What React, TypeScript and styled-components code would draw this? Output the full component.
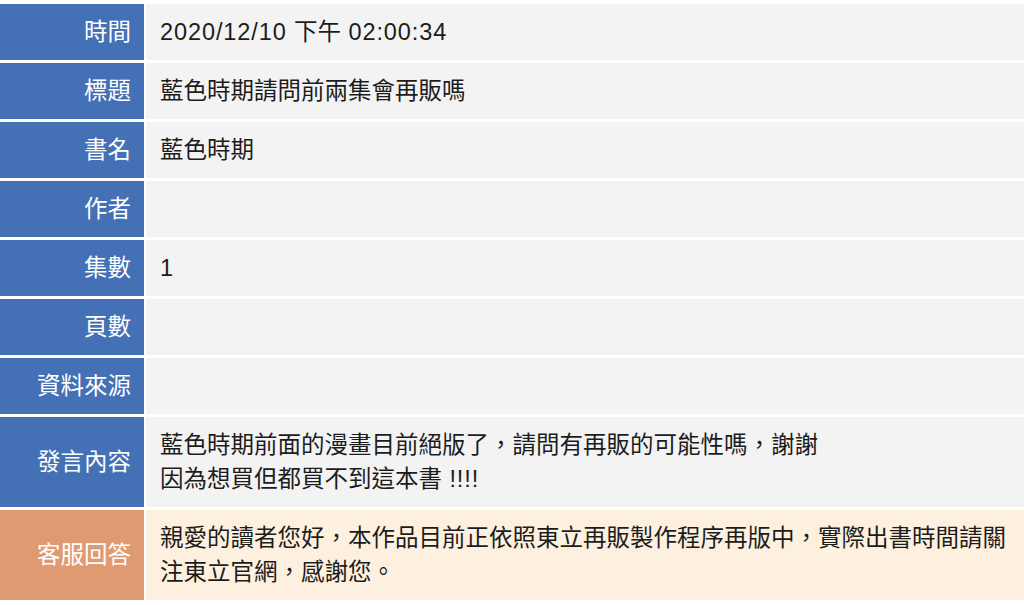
import React from 'react';
import styled, { createGlobalStyle } from 'styled-components';

type Tone = 'blue' | 'orange';

type Row = {
  label: string;
  value?: string[];
  tone?: Tone;
};

const rows: Row[] = [
  { label: '時間', value: ['2020/12/10 下午 02:00:34'] },
  { label: '標題', value: ['藍色時期請問前兩集會再販嗎'] },
  { label: '書名', value: ['藍色時期'] },
  { label: '作者' },
  { label: '集數', value: ['1'] },
  { label: '頁數' },
  { label: '資料來源' },
  {
    label: '發言內容',
    value: [
      '藍色時期前面的漫畫目前絕版了，請問有再販的可能性嗎，謝謝',
      '因為想買但都買不到這本書 !!!!',
    ],
  },
  {
    label: '客服回答',
    tone: 'orange',
    value: [
      '親愛的讀者您好，本作品目前正依照東立再販製作程序再版中，實際出書時間請關注東立官網，感謝您。',
    ],
  },
];

const GlobalStyle = createGlobalStyle`
  html, body {
    margin: 0;
    padding: 0;
    background: #ffffff;
  }
  body {
    font-family: "Liberation Sans", "Noto Sans CJK TC", sans-serif;
  }
`;

const Page = styled.div`
  width: 1024px;
  padding-top: 4px;
`;

const Table = styled.div`
  display: grid;
  grid-template-columns: 144px 1fr;
  column-gap: 2px;
  row-gap: 3px;
`;

const Label = styled.div<{ tone: Tone }>`
  display: flex;
  align-items: center;
  justify-content: flex-end;
  padding: 11px 13px 11px 0;
  background: ${({ tone }) => (tone === 'orange' ? '#e09a72' : '#4470b5')};
  color: #ffffff;
  font-size: 23.5px;
  line-height: 34px;
  white-space: nowrap;
`;

const Value = styled.div<{ tone: Tone }>`
  display: flex;
  flex-direction: column;
  justify-content: center;
  min-height: 34px;
  padding: 11px 8px 11px 14px;
  background: ${({ tone }) => (tone === 'orange' ? '#fdf0df' : '#f3f3f3')};
  color: #1c1c1c;
  font-size: 23.5px;
  line-height: 34px;
`;

const Line = styled.div`
  word-break: break-all;
`;

// latin runs are a bit wider in the original font
const Latin = styled.span`
  letter-spacing: 0.9px;
`;

// split a line into latin / cjk runs
const renderLine = (text: string) =>
  text.split(/([\x20-\x7e]+)/).map((part, i) =>
    /^[\x20-\x7e]+$/.test(part) ? <Latin key={i}>{part}</Latin> : part,
  );

export default function App() {
  return (
    <Page>
      <GlobalStyle />
      <Table>
        {rows.map((row) => {
          const tone = row.tone || 'blue';
          return (
            <React.Fragment key={row.label}>
              <Label tone={tone}>{row.label}</Label>
              <Value tone={tone}>
                {(row.value || []).map((line, i) => (
                  <Line key={i}>{renderLine(line)}</Line>
                ))}
              </Value>
            </React.Fragment>
          );
        })}
      </Table>
    </Page>
  );
}
